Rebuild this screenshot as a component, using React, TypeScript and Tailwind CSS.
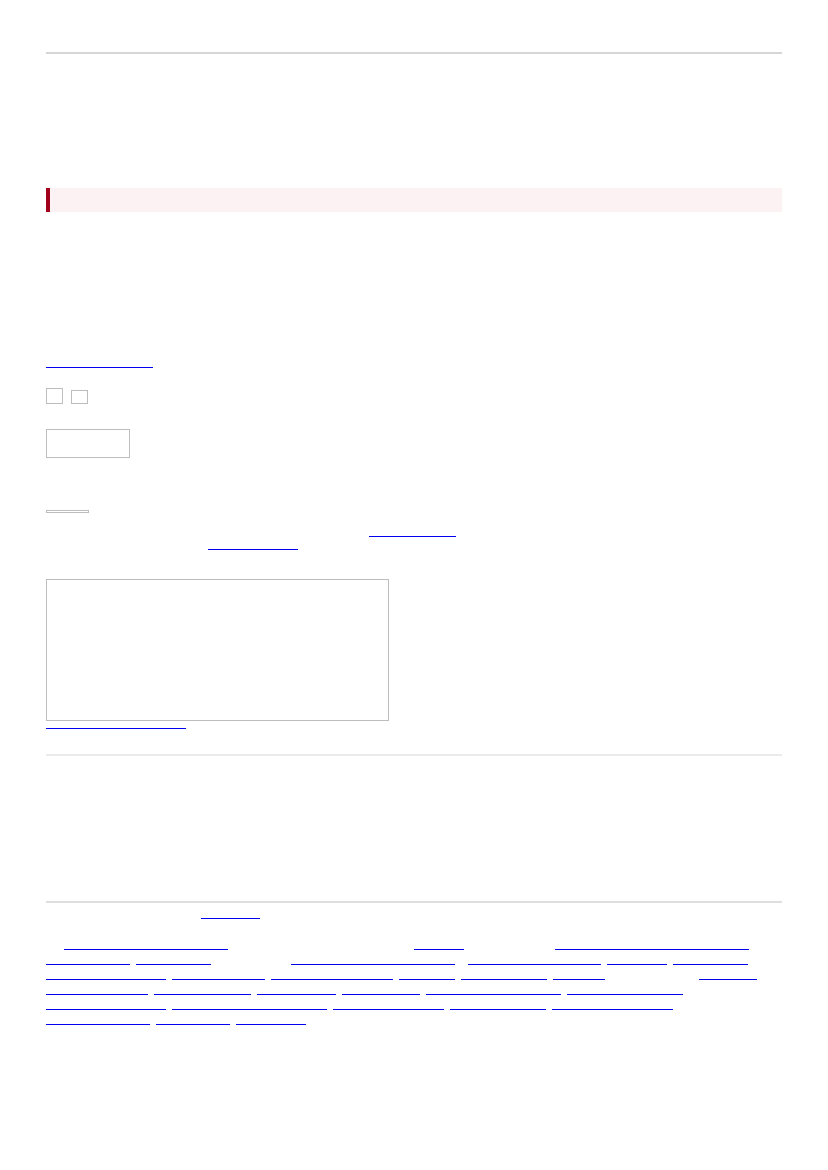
import type { ReactNode } from "react";

type Item = { label: string; cls: string };

// footer link rows, one array per wrapped line
const FOOTER_ROWS: Item[][] = [
  [
    { label: "Related articles and guides", cls: "ml-[18px] w-[164px]" },
    { label: "Archive", cls: "ml-[186px] w-[50px]" },
    { label: "Reference material index", cls: "ml-[91px] w-[194px]" },
  ],
  [
    { label: "Documentation", cls: "w-[84px]" },
    { label: "Tutorials", cls: "ml-[6px] w-[75px]" },
    { label: "Frequently asked questions", cls: "ml-[80px] w-[164px]" },
    { label: "Community resources", cls: "ml-[13px] w-[133px]" },
    { label: "Support", cls: "ml-[6px] w-[60px]" },
    { label: "Downloads", cls: "ml-[6px] w-[75px]" },
  ],
  [
    { label: "Release history", cls: "w-[120px]" },
    { label: "Changelog", cls: "ml-[6px] w-[93px]" },
    { label: "Getting started", cls: "ml-[6px] w-[122px]" },
    { label: "Blog", cls: "ml-[6px] w-[56px]" },
    { label: "Examples", cls: "ml-[6px] w-[86px]" },
    { label: "News", cls: "ml-[6px] w-[52px]" },
    { label: "Events", cls: "ml-[94px] w-[58px]" },
  ],
  [
    { label: "Contributors", cls: "w-[102px]" },
    { label: "Translations", cls: "ml-[6px] w-[97px]" },
    { label: "Licensing", cls: "ml-[6px] w-[79px]" },
    { label: "Security", cls: "ml-[6px] w-[78px]" },
    { label: "Accessibility notes", cls: "ml-[6px] w-[135px]" },
    { label: "Privacy policy", cls: "ml-[6px] w-[116px]" },
  ],
  [
    { label: "Terms of service", cls: "w-[120px]" },
    { label: "Contact the maintainers", cls: "ml-[6px] w-[155px]" },
    { label: "Mailing lists", cls: "ml-[6px] w-[111px]" },
    { label: "Issue tracker", cls: "ml-[6px] w-[96px]" },
    { label: "Source repository", cls: "ml-[6px] w-[121px]" },
  ],
  [
    { label: "Roadmap", cls: "w-[104px]" },
    { label: "Sitemap", cls: "ml-[6px] w-[74px]" },
    { label: "About", cls: "ml-[6px] w-[70px]" },
  ],
];

function Link({
  cls,
  size = "text-[11px] leading-[12px]",
  children,
}: {
  cls: string;
  size?: string;
  children: ReactNode;
}) {
  return (
    <a
      href="#"
      className={`block shrink-0 overflow-hidden whitespace-nowrap border-b border-[#0000ee] text-transparent ${size} ${cls}`}
    >
      {children}
    </a>
  );
}

function Box({ cls }: { cls: string }) {
  return <div className={`shrink-0 border border-[#bdbdbd] bg-white ${cls}`} />;
}

export default function App() {
  return (
    <div className="min-h-[1170px] bg-white px-[46px] pt-[52px] font-['Liberation_Sans',Arial,sans-serif] text-[13px] text-transparent">
      <hr className="h-[2px] border-0 bg-[#d6d6d6]" />

      <div className="flex h-[134px] items-center">
        <h1 className="text-[22px]">Page</h1>
      </div>

      <div className="flex h-[24px] items-center border-l-4 border-[#a0001c] bg-[#fcf1f3] pl-2">
        Notice
      </div>

      <div className="h-[140px] pt-6">
        <p>Introduction</p>
      </div>

      <div className="flex h-[16px] items-end">
        <Link cls="h-[16px] w-[107px]">Read more</Link>
      </div>

      <div className="mt-[20px] flex items-end gap-[8px]">
        <Box cls="h-[16px] w-[17px]" />
        <Box cls="h-[14px] w-[17px]" />
      </div>

      <Box cls="mt-[25px] h-[29px] w-[84px]" />

      <div className="mt-[52px] h-[3px] w-[43px] border border-[#bdbdbd]" />

      <div className="mt-[10px] flex h-[14px] items-end">
        <Link cls="ml-[323px] h-[14px] w-[87px]">Source link</Link>
      </div>
      <div className="flex h-[13px] items-end">
        <Link cls="ml-[162px] h-[13px] w-[90px]">Second link</Link>
      </div>

      <Box cls="mt-[29px] h-[142px] w-[343px]" />
      <div className="flex h-[8px] items-end">
        <Link cls="h-[8px] w-[140px]" size="text-[6px] leading-[7px]">
          Open in new window
        </Link>
      </div>

      <hr className="mt-[25px] h-[2px] border-0 bg-[#ebebeb]" />
      <div className="h-[145px]" />
      <hr className="h-[2px] border-0 bg-[#dedede]" />

      <div className="flex h-[16px] items-end">
        <Link cls="ml-[155px] h-[16px] w-[59px]">Edit</Link>
      </div>

      <div className="mt-[16px] flex flex-col">
        {FOOTER_ROWS.map((row, i) => (
          <div key={i} className="flex h-[15px] items-end">
            {row.map((item) => (
              <Link key={item.label} cls={`h-[15px] ${item.cls}`}>
                {item.label}
              </Link>
            ))}
          </div>
        ))}
      </div>
    </div>
  );
}
